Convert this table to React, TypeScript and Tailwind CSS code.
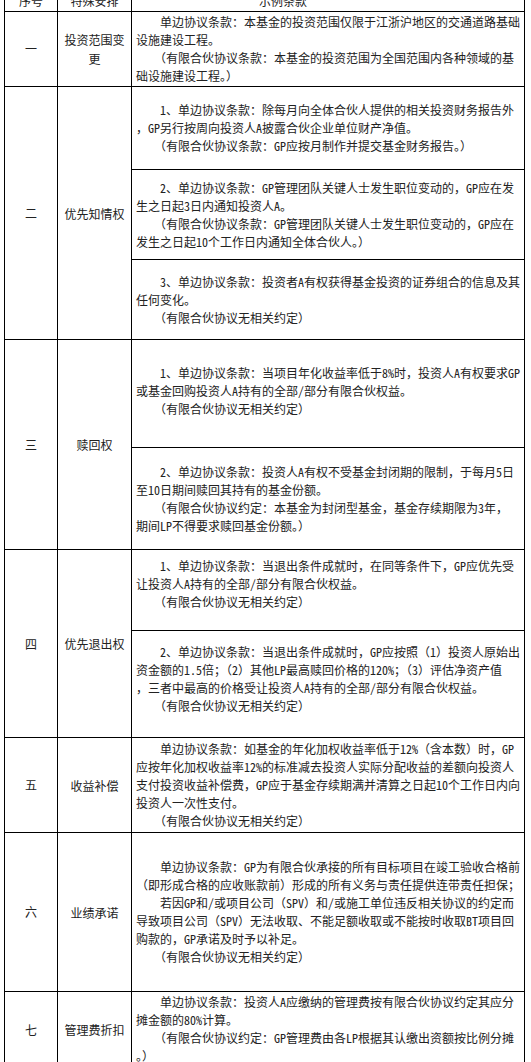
type Cell = { h?: string; pad?: string; lines: string[] }
type Row = { no: string; name: string[]; h: string; top?: boolean; cells: Cell[] }

const I = '　　'

const rows: Row[] = [
  {
    no: '一',
    name: ['投资范围变', '更'],
    h: 'h-[75px]',
    cells: [
      {
        lines: [
          I + '单边协议条款：本基金的投资范围仅限于江浙沪地区的交通道路基础',
          '设施建设工程。',
          I + '（有限合伙协议条款：本基金的投资范围为全国范围内各种领域的基',
          '础设施建设工程。）',
        ],
      },
    ],
  },
  {
    no: '二',
    name: ['优先知情权'],
    h: 'h-[253px]',
    cells: [
      {
        h: 'h-[83px]',
        lines: [
          I + '1、单边协议条款：除每月向全体合伙人提供的相关投资财务报告外',
          '，GP另行按周向投资人A披露合伙企业单位财产净值。',
          I + '（有限合伙协议条款：GP应按月制作并提交基金财务报告。）',
        ],
      },
      {
        h: 'h-[90px]',
        lines: [
          I + '2、单边协议条款：GP管理团队关键人士发生职位变动的，GP应在发',
          '生之日起3日内通知投资人A。',
          I + '（有限合伙协议条款：GP管理团队关键人士发生职位变动的，GP应在',
          '发生之日起10个工作日内通知全体合伙人。）',
        ],
      },
      {
        lines: [
          I + '3、单边协议条款：投资者A有权获得基金投资的证券组合的信息及其',
          '任何变化。',
          I + '（有限合伙协议无相关约定）',
        ],
      },
    ],
  },
  {
    no: '三',
    name: ['赎回权'],
    h: 'h-[210px]',
    cells: [
      {
        h: 'h-[108px]',
        pad: 'pb-[6px]',
        lines: [
          I + '1、单边协议条款：当项目年化收益率低于8%时，投资人A有权要求GP',
          '或基金回购投资人A持有的全部/部分有限合伙权益。',
          I + '（有限合伙协议无相关约定）',
        ],
      },
      {
        lines: [
          I + '2、单边协议条款：投资人A有权不受基金封闭期的限制，于每月5日',
          '至10日期间赎回其持有的基金份额。',
          I + '（有限合伙协议约定：本基金为封闭型基金，基金存续期限为3年，',
          '期间LP不得要求赎回基金份额。）',
        ],
      },
    ],
  },
  {
    no: '四',
    name: ['优先退出权'],
    h: 'h-[188px]',
    cells: [
      {
        h: 'h-[81px]',
        pad: 'pb-[12px]',
        lines: [
          I + '1、单边协议条款：当退出条件成就时，在同等条件下，GP应优先受',
          '让投资人A持有的全部/部分有限合伙权益。',
          I + '（有限合伙协议无相关约定）',
        ],
      },
      {
        pad: 'pb-[10px]',
        lines: [
          I + '2、单边协议条款：当退出条件成就时，GP应按照（1）投资人原始出',
          '资金额的1.5倍；（2）其他LP最高赎回价格的120%；（3）评估净资产值',
          '，三者中最高的价格受让投资人A持有的全部/部分有限合伙权益。',
          I + '（有限合伙协议无相关约定）',
        ],
      },
    ],
  },
  {
    no: '五',
    name: ['收益补偿'],
    h: 'h-[95px]',
    cells: [
      {
        lines: [
          I + '单边协议条款：如基金的年化加权收益率低于12%（含本数）时，GP',
          '应按年化加权收益率12%的标准减去投资人实际分配收益的差额向投资人',
          '支付投资收益补偿费，GP应于基金存续期满并清算之日起10个工作日内向',
          '投资人一次性支付。',
          I + '（有限合伙协议无相关约定）',
        ],
      },
    ],
  },
  {
    no: '六',
    name: ['业绩承诺'],
    h: 'h-[159px]',
    cells: [
      {
        lines: [
          I + '单边协议条款：GP为有限合伙承接的所有目标项目在竣工验收合格前',
          '（即形成合格的应收账款前）形成的所有义务与责任提供连带责任担保；',
          I + '若因GP和/或项目公司（SPV）和/或施工单位违反相关协议的约定而',
          '导致项目公司（SPV）无法收取、不能足额收取或不能按时收取BT项目回',
          '购款的，GP承诺及时予以补足。',
          I + '（有限合伙协议无相关约定）',
        ],
      },
    ],
  },
  {
    no: '七',
    name: ['管理费折扣'],
    h: 'h-[76px]',
    top: true,
    cells: [
      {
        lines: [
          I + '单边协议条款：投资人A应缴纳的管理费按有限合伙协议约定其应分',
          '摊金额的80%计算。',
          I + '（有限合伙协议约定：GP管理费由各LP根据其认缴出资额按比例分摊',
          '。）',
        ],
      },
    ],
  },
]

function Clause({ cell, last, top }: { cell: Cell; last: boolean; top?: boolean }) {
  return (
    <div
      className={`flex flex-col pl-[4px] ${top ? 'justify-start pt-[1px]' : 'justify-center'} ${
        last ? 'flex-1' : `${cell.h} border-b border-black`
      } ${cell.pad ?? ''}`}
    >
      {cell.lines.map((l, i) => (
        <div key={i} className="whitespace-pre leading-[18px]">
          {l}
        </div>
      ))}
    </div>
  )
}

export default function App() {
  return (
    <div className="w-[531px] h-[1062px] overflow-hidden bg-white text-[12px] text-[#222] font-['Noto_Sans_Mono_CJK_SC','Noto_Sans_CJK_SC',sans-serif]">
      <div className="-mt-[9px] ml-[4px] w-[521px] border-l border-r border-black">
        <div className="flex h-[21px] border-b border-black">
          <div className="w-[53px] border-r border-black flex items-center justify-center">序号</div>
          <div className="w-[74px] border-r border-black flex items-center justify-center">特殊安排</div>
          <div className="flex-1 flex items-center pl-[127px]">示例条款</div>
        </div>
        {rows.map((r) => (
          <div key={r.no} className={`flex border-b border-black ${r.h}`}>
            <div className="w-[53px] border-r border-black flex items-center justify-center">{r.no}</div>
            <div className="w-[74px] border-r border-black flex flex-col items-center justify-center leading-[19px]">
              {r.name.map((n) => (
                <div key={n}>{n}</div>
              ))}
            </div>
            <div className="flex-1 flex flex-col">
              {r.cells.map((c, i) => (
                <Clause key={i} cell={c} last={i === r.cells.length - 1} top={r.top} />
              ))}
            </div>
          </div>
        ))}
      </div>
    </div>
  )
}
